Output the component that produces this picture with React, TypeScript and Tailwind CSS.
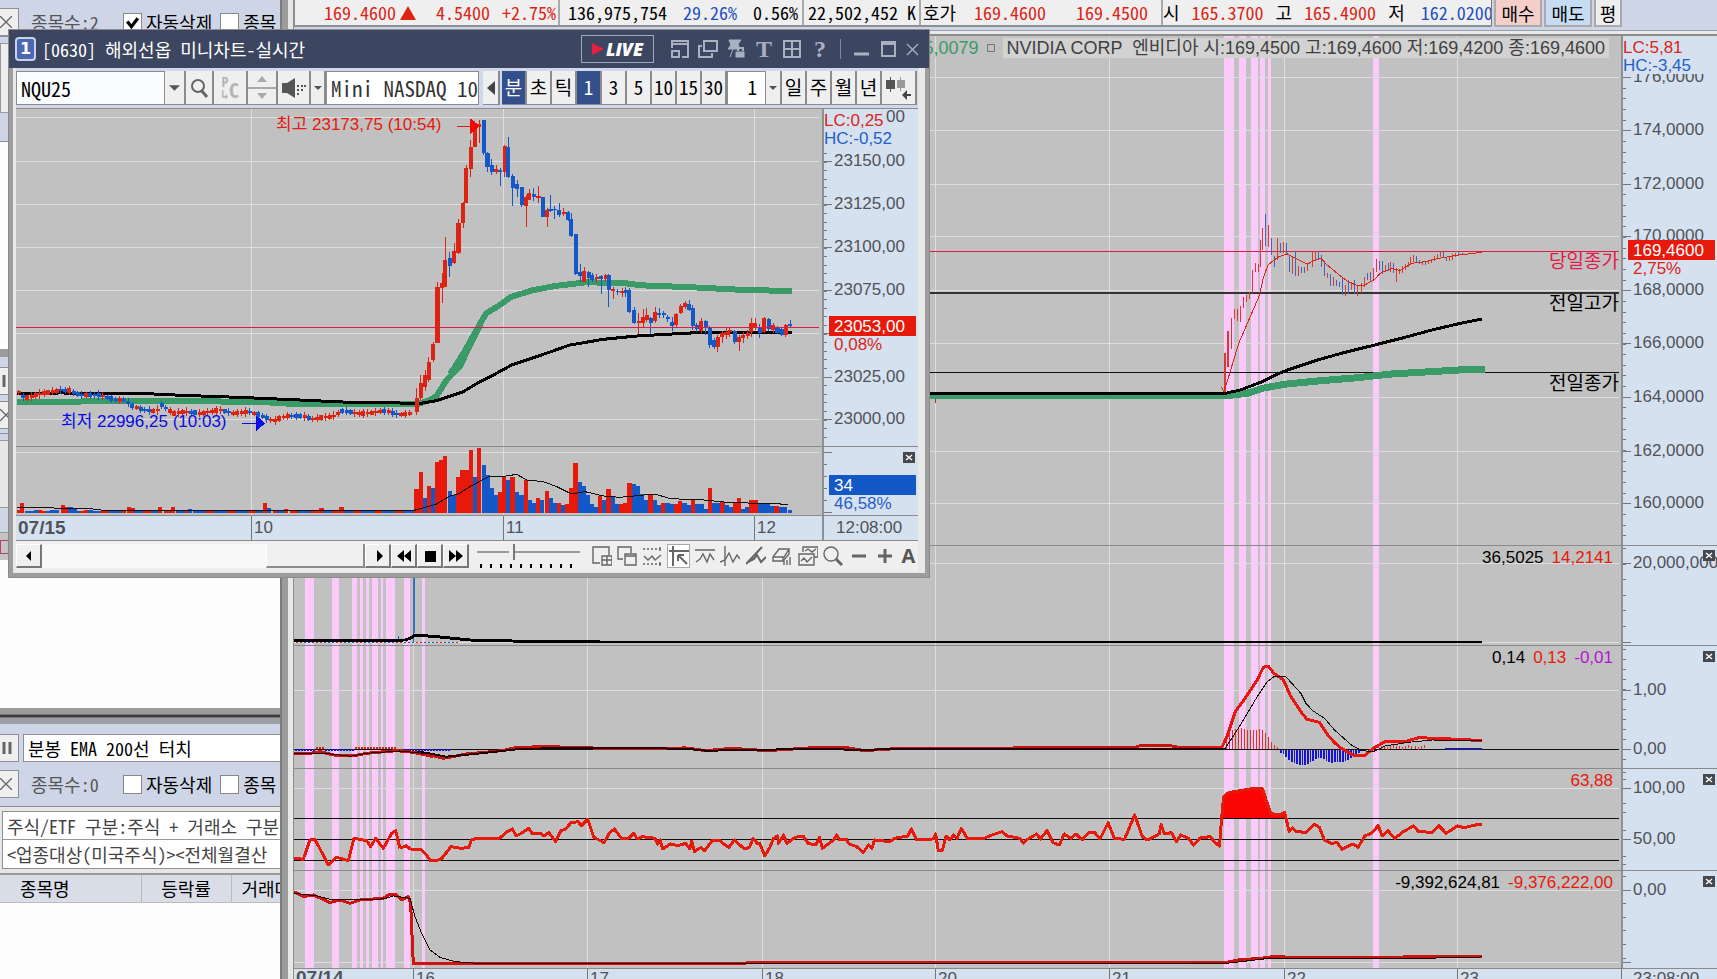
import type { ReactNode } from "react"

type Point = [number, number]
// [x, high, low, bodyTop, bodyBottom, up]
type Candle = [number, number, number, number, number, 0 | 1]
type Bar = [number, number, 0 | 1]

const RED = "#dc2414"
const BLUE = "#1458c8"
const GREEN = "#3a9a68"

const MONO =
  "[font-family:'Noto_Sans_Mono_CJK_KR','Noto_Sans_CJK_KR','Liberation_Mono',monospace]"
const SANS = "[font-family:'Liberation_Sans','Noto_Sans_CJK_KR',sans-serif]"

const toPath = (points: Point[]) => points.map((p) => p.join(",")).join(" ")

const pairs = (values: string): Point[] =>
  values.split(" ").map((v) => v.split(",").map(Number) as Point)

const Line = ({
  points,
  color,
  width,
}: {
  points: string
  color: string
  width: number
}) => (
  <polyline
    points={toPath(pairs(points))}
    fill="none"
    stroke={color}
    strokeWidth={width}
    strokeLinejoin="round"
    vectorEffect="non-scaling-stroke"
  />
)

/* ---------- main chart data ---------- */

const sessionBands: Point[] = [
  [305, 9], [332, 7], [352, 5], [360, 3], [366, 3], [372, 6], [381, 2],
  [386, 9], [404, 6], [422, 3], [1224, 10], [1239, 7], [1251, 7],
  [1260, 5], [1268, 3], [1373, 6],
]

const hourLines = [413, 587, 762, 935, 1109, 1284, 1457]

const mainTicks: [number, number, number, 0 | 1][] = [
  [104, 458, 575, 1], [113, 393, 500, 1], [122, 353, 447, 1], [131, 327, 357, 1],
  [140, 327, 362, 1], [149, 318, 365, 1], [158, 290, 325, 1], [167, 285, 305, 1],
  [176, 277, 298, 1], [185, 210, 280, 1], [194, 190, 215, 1], [203, 192, 215, 1],
  [211, 120, 200, 1], [216, 85, 150, 1], [225, 43, 137, 0], [234, 75, 140, 1],
  [243, 115, 165, 0], [252, 168, 200, 0], [261, 115, 180, 1], [270, 130, 160, 0],
  [279, 125, 160, 1], [288, 128, 165, 0], [297, 165, 217, 0], [305, 168, 222, 1],
  [314, 153, 227, 0], [323, 198, 228, 1], [332, 200, 220, 0], [341, 200, 218, 0],
  [350, 190, 213, 1], [365, 153, 200, 1], [373, 153, 180, 1], [382, 155, 180, 0],
  [391, 166, 200, 0], [400, 190, 227, 0], [409, 220, 235, 1], [418, 222, 258, 0],
  [427, 232, 257, 1], [436, 240, 258, 0], [445, 245, 262, 0], [454, 235, 285, 0],
  [462, 255, 287, 1], [471, 240, 283, 0], [480, 245, 270, 1], [489, 240, 283, 0],
  [498, 258, 287, 1], [510, 248, 280, 1], [519, 230, 260, 1], [528, 220, 240, 0],
  [536, 215, 245, 0], [545, 203, 240, 1], [554, 178, 215, 1], [563, 183, 210, 0],
  [572, 183, 222, 0], [581, 195, 215, 1], [590, 188, 212, 0], [597, 185, 215, 1],
  [604, 188, 220, 0], [613, 205, 245, 1], [622, 208, 222, 1], [631, 198, 218, 1],
  [640, 192, 210, 1], [649, 185, 200, 1], [657, 172, 195, 1], [665, 165, 185, 1],
  [674, 167, 190, 0], [683, 180, 192, 0], [692, 182, 195, 1], [701, 183, 195, 0],
  [710, 180, 193, 1], [719, 178, 190, 1], [728, 168, 182, 1], [737, 162, 178, 1],
  [746, 153, 172, 1], [755, 157, 172, 0], [764, 170, 182, 0], [773, 170, 182, 1],
  [782, 162, 180, 1], [791, 158, 170, 1], [800, 153, 168, 0], [812, 158, 166, 1],
]

const macdUp = [610, 605, 600, 598, 594, 595, 598, 600, 600, 600, 600, 598, 600, 610, 622, 636, 645, 652]
const macdDown = [
  668, 673, 682, 690, 696, 700, 703, 704, 704, 704, 702, 697, 692, 687, 685, 684, 688, 692,
  696, 699, 697, 695, 695, 695, 694, 690, 684, 677, 672, 668, 664,
]

/* ---------- mini chart data ---------- */

const miniCandles: Candle[] = [
  [73, 820, 870, 825, 860, 1], [84, 770, 845, 785, 840, 1], [97, 727, 785, 733, 780, 1],
  [109, 545, 730, 560, 730, 1], [122, 520, 608, 550, 565, 1], [131, 410, 560, 480, 560, 1],
  [144, 455, 532, 475, 497, 0], [158, 430, 492, 452, 490, 1], [170, 358, 462, 370, 458, 1],
  [183, 305, 385, 308, 370, 1], [192, 195, 310, 205, 308, 1], [205, 120, 230, 142, 207, 1],
  [217, 62, 142, 75, 140, 1], [230, 60, 130, 72, 80, 1], [243, 60, 165, 60, 160, 0],
  [254, 155, 215, 158, 200, 0], [266, 178, 225, 195, 215, 0], [279, 195, 222, 207, 215, 1],
  [291, 205, 257, 210, 217, 0], [304, 135, 230, 137, 215, 1], [314, 110, 235, 140, 230, 0],
  [327, 222, 317, 228, 265, 0], [340, 240, 292, 252, 268, 0], [353, 262, 320, 262, 315, 0],
  [366, 285, 380, 292, 318, 1], [375, 267, 300, 280, 300, 1], [388, 265, 302, 283, 292, 0],
  [402, 257, 308, 288, 294, 1], [414, 290, 352, 292, 350, 0], [427, 325, 380, 330, 350, 1],
  [437, 285, 335, 326, 332, 0], [449, 318, 357, 326, 331, 0], [462, 308, 350, 330, 345, 0],
  [475, 325, 347, 335, 341, 1], [488, 332, 362, 335, 360, 0], [497, 340, 410, 358, 407, 0],
  [510, 403, 524, 403, 522, 0], [523, 492, 545, 515, 527, 0], [535, 502, 547, 512, 545, 1],
  [548, 512, 560, 515, 535, 0], [558, 518, 545, 525, 540, 0], [571, 522, 548, 530, 537, 1],
  [584, 525, 582, 528, 536, 0], [597, 522, 545, 525, 537, 1], [606, 522, 622, 525, 570, 0],
  [619, 560, 598, 566, 572, 1], [632, 568, 585, 572, 577, 0], [645, 565, 592, 572, 578, 1],
  [656, 562, 590, 570, 580, 0], [666, 565, 638, 570, 635, 0], [680, 622, 672, 630, 668, 0],
  [693, 640, 702, 662, 670, 1], [706, 628, 682, 650, 668, 1], [717, 625, 665, 645, 660, 1],
  [728, 650, 702, 655, 668, 0], [741, 622, 668, 635, 662, 1], [753, 625, 655, 639, 646, 0],
  [766, 632, 655, 640, 645, 0], [778, 645, 665, 652, 657, 0], [790, 650, 692, 665, 677, 0],
  [802, 640, 680, 642, 675, 1], [815, 612, 642, 618, 640, 1], [828, 603, 628, 608, 622, 1],
  [840, 600, 634, 612, 630, 0], [850, 615, 690, 625, 677, 0], [862, 668, 697, 675, 687, 0],
  [875, 655, 698, 662, 692, 1], [888, 660, 705, 663, 680, 0], [900, 678, 745, 680, 735, 0],
  [912, 715, 748, 720, 740, 0], [923, 705, 755, 712, 742, 1], [936, 692, 728, 698, 712, 1],
  [948, 685, 718, 695, 705, 1], [958, 684, 712, 690, 697, 1], [972, 690, 733, 692, 727, 0],
  [985, 705, 752, 710, 725, 1], [997, 697, 728, 706, 714, 1], [1010, 690, 718, 698, 708, 1],
  [1020, 655, 710, 668, 695, 1], [1032, 655, 690, 668, 680, 1], [1045, 672, 715, 680, 700, 0],
  [1058, 652, 700, 655, 695, 1], [1071, 655, 692, 657, 688, 0], [1084, 668, 700, 676, 690, 1],
  [1096, 678, 702, 684, 698, 0], [1108, 680, 708, 688, 704, 0], [1120, 672, 712, 675, 706, 1],
  [1133, 661, 685, 671, 679, 0],
]

const openingCourse = pairs(
  "55,215 75,235 120,222 180,210 210,212 240,225 300,225 345,240 375,240 400,260 440,270 470,274 485,255 520,280 560,275 600,280 660,270 700,280 750,275 785,288 820,303 860,287 910,288 940,297 1000,288 1030,272 1080,282 1160,272 1200,285 1240,278",
)

const courseAt = (x: number) => {
  const i = Math.max(1, openingCourse.findIndex((p) => p[0] >= x))
  const [x0, y0] = openingCourse[i - 1]
  const [x1, y1] = openingCourse[i]
  return y0 + ((y1 - y0) * (x - x0)) / (x1 - x0)
}

const openingCandles: Candle[] = Array.from({ length: 94 }, (_, i) => {
  const x = 57 + i * 12.6
  const y = courseAt(x)
  const next = courseAt(Math.min(x + 12.6, 1240))
  const body = 3 + ((i * 7) % 5)
  const wick = 8 + ((i * 11) % 7)
  return [x, y - wick, y + wick, y - body, y + body, next < y || i % 4 === 0 ? 1 : 0]
})

const breakoutCandles: Candle[] = [
  [1250, 205, 285, 235, 275, 1],
  [1263, 165, 240, 188, 235, 1],
  [1276, 150, 212, 172, 186, 1],
]

const tallOpening: Record<number, Bar> = {
  1: [67, 548, 1], 10: [190, 555, 1], 11: [200, 562, 1], 12: [212, 562, 0], 13: [225, 566, 0],
  26: [388, 562, 1], 27: [398, 564, 1], 34: [480, 560, 1], 37: [520, 562, 1],
  41: [570, 566, 0], 59: [795, 548, 1], 60: [808, 565, 0], 64: [858, 566, 1],
  72: [965, 565, 1], 77: [1025, 562, 1],
}

const openingVolume: Bar[] = Array.from(
  { length: 95 },
  (_, i) => tallOpening[i] ?? [57 + i * 12.6, 570 + ((i * 5) % 4), i % 5 < 2 ? 1 : 0],
)

const earlyVolume: Bar[] = [
  [1250, 507, 1], [1263, 457, 1], [1275, 533, 0], [1287, 497, 1], [1300, 503, 0],
  [1313, 425, 1], [1325, 421, 1], [1336, 408, 1], [1350, 512, 0], [1362, 525, 0],
  [1376, 470, 1], [1388, 450, 1], [1400, 450, 1],
]

const lateVolume: Bar[] = [
  [3, 390, 1], [15, 472, 0], [28, 385, 1], [43, 435, 0], [54, 465, 0], [66, 503, 0],
  [78, 525, 0], [91, 515, 1], [103, 470, 1], [115, 480, 0], [128, 470, 1], [142, 515, 0],
  [155, 525, 0], [168, 480, 1], [180, 540, 0], [192, 548, 0], [204, 535, 1], [217, 540, 0],
  [231, 512, 1], [243, 535, 0], [256, 548, 0], [268, 548, 1], [280, 556, 0], [292, 552, 1],
  [304, 503, 1], [317, 430, 1], [330, 485, 0], [342, 497, 0], [354, 525, 0], [366, 552, 0],
  [379, 560, 0], [391, 528, 1], [403, 540, 0], [416, 507, 1], [429, 528, 0], [441, 552, 0],
  [454, 552, 1], [466, 548, 1], [479, 488, 1], [492, 492, 0], [504, 497, 0], [517, 522, 0],
  [529, 540, 0], [542, 522, 1], [555, 540, 0], [567, 556, 0], [580, 548, 1], [593, 548, 0],
  [606, 552, 0], [619, 552, 1], [631, 543, 1], [644, 548, 0], [656, 556, 0], [669, 540, 1],
  [682, 552, 0], [695, 552, 0], [708, 566, 0], [721, 503, 1], [734, 548, 0], [746, 548, 0],
  [758, 546, 1], [770, 556, 0], [782, 560, 0], [795, 545, 1], [807, 533, 1], [820, 566, 0],
  [832, 562, 0], [845, 540, 1], [857, 540, 1], [870, 548, 0], [882, 550, 0], [895, 552, 0],
  [908, 558, 0], [920, 558, 1], [933, 560, 0], [946, 562, 0], [960, 570, 0],
]

const Candles = ({ items, body }: { items: Candle[]; body: number }) => (
  <>
    {items.map(([x, high, low, top, bottom, up], i) => (
      <g key={i} fill={up ? RED : BLUE}>
        <rect x={x - 1.5} y={high} width={3} height={low - high} />
        <rect x={x - body / 2} y={top} width={body} height={bottom - top} />
      </g>
    ))}
  </>
)

const VolumeBars = ({ items }: { items: Bar[] }) => (
  <>
    {items.map(([x, top, up], i) => (
      <rect key={i} x={x - 6.5} y={top} width={13} height={578 - top} fill={up ? "#e6190a" : BLUE} />
    ))}
  </>
)

/* ---------- axis ---------- */

type Label = { y: number; text: string }

const Axis = ({
  top,
  height,
  labels,
  minor,
  children,
}: {
  top: number
  height: number
  labels: Label[]
  minor: number[]
  children?: ReactNode
}) => (
  <svg
    className={`w-24 shrink-0 bg-[#d6e1f0] text-[17px] ${SANS}`}
    height={height}
    viewBox={`0 ${top} 96 ${height}`}
  >
    <rect x="0" y={top} width="2" height={height} fill="#8c8f94" />
    {minor.map((y) => (
      <rect key={y} x="2" y={Math.round(y)} width="3" height="1" fill="#777" />
    ))}
    {labels.map(({ y, text }) => (
      <g key={text + y}>
        <rect x="2" y={y} width="8" height="1" fill="#777" />
        <text x="12" y={y + 5} fill="#505357">
          {text}
        </text>
      </g>
    ))}
    {children}
  </svg>
)

const range = (from: number, to: number, step: number) => {
  const out: number[] = []
  for (let y = from; y < to; y += step) out.push(y)
  return out
}

const CloseMark = ({ x, y }: { x: number; y: number }) => (
  <g>
    <rect x={x} y={y} width="12" height="11" fill="#44474c" />
    <path d={`M${x + 3} ${y + 3}l6 5m0-5l-6 5`} stroke="#fff" strokeWidth="1.4" />
  </g>
)

/* ---------- main chart ---------- */

const Pane = ({
  top,
  height,
  grid,
  labels,
  minor,
  axis,
  readout,
  children,
}: {
  top: number
  height: number
  grid: number[]
  labels: Label[]
  minor: number[]
  axis?: ReactNode
  readout?: ReactNode
  children?: ReactNode
}) => (
  <div className="flex shrink-0">
    <div className="relative min-w-0 flex-1">
      <svg
        className="block w-full bg-[#c1c1c1]"
        height={height}
        viewBox={`294 ${top} 1327 ${height}`}
        preserveAspectRatio="none"
        shapeRendering="crispEdges"
      >
        {sessionBands.map(([x, w]) => (
          <rect key={x} x={x} y={top} width={w} height={height} fill="#fcc9fb" />
        ))}
        {hourLines.map((x) => (
          <rect key={x} x={x} y={top} width="1" height={height} fill="#dedede" />
        ))}
        {grid.map((y) => (
          <rect key={y} x="294" y={y} width="1325" height="1" fill="#dedede" />
        ))}
        {children}
        <rect x="294" y={top + height - 1} width="1327" height="1" fill="#8a8a8a" />
      </svg>
      {readout}
    </div>
    <Axis top={top} height={height} labels={labels} minor={minor}>
      <rect x="0" y={top + height - 1} width="96" height="1" fill="#8a8a8a" />
      {axis}
    </Axis>
  </div>
)

const Readout = ({ items }: { items: [string, string][] }) => (
  <p className={`absolute top-0.5 right-2 flex gap-2 text-[17px] leading-5 ${SANS}`}>
    {items.map(([text, color]) => (
      <span key={text} className={color}>
        {text}
      </span>
    ))}
  </p>
)

const RIGHT = "translate(1190 200) scale(.3361 .3333)"
const RIGHT_LOW = "translate(1190 530) scale(.3361 .3333)"
const MIDDLE = "translate(400 730) scale(.5102 .3333)"
const LEFT = "translate(0 570) scale(.3333)"

const PricePane = () => (
  <Pane
    top={36}
    height={510}
    grid={[77, 130, 184, 236, 290, 343, 397, 451, 503]}
    labels={[
      { y: 77, text: "176,0000" },
      { y: 130, text: "174,0000" },
      { y: 184, text: "172,0000" },
      { y: 236, text: "170,0000" },
      { y: 290, text: "168,0000" },
      { y: 343, text: "166,0000" },
      { y: 397, text: "164,0000" },
      { y: 451, text: "162,0000" },
      { y: 503, text: "160,0000" },
    ]}
    minor={range(77, 543, 10.66)}
    axis={
      <>
        <rect x="2" y="36" width="94" height="38" fill="#d6e1f0" />
        <text x="2" y="53" fill={RED}>LC:5,81</text>
        <text x="2" y="71" fill="#2460c8">HC:-3,45</text>
        <rect x="7" y="240" width="87" height="20" fill="#e6190a" />
        <text x="12" y="256" fill="#fff">169,4600</text>
        <text x="12" y="274" fill={RED}>2,75%</text>
      </>
    }
    readout={
      <>
        <p
          className={`absolute inset-x-3 top-0.5 flex h-5 items-center justify-end gap-1.5 text-[18px] whitespace-pre ${SANS}`}
        >
          <span className="text-[#3a9a68]">165,0079</span>
          <span className="mx-0.5 size-2 border border-[#777]" />
          <span className="bg-[#d2d2d2] px-1 leading-5 text-[#404040]">
            NVIDIA CORP  엔비디아 시:169,4500 고:169,4600 저:169,4200 종:169,4600
          </span>
        </p>
        <div className={`absolute top-[216px] right-0.5 flex flex-col text-right text-[19px] leading-5 ${SANS}`}>
          <span className="mb-[22px] text-[#e01c4c]">당일종가</span>
          <span className="mb-[60px] text-black">전일고가</span>
          <span className="text-black">전일종가</span>
        </div>
      </>
    }
  >
    <rect x="294" y="251" width="1325" height="1" fill="#dc1c40" />
    <rect x="294" y="292" width="1325" height="2" fill="#333" />
    <rect x="294" y="372" width="1325" height="1" fill="#111" />
    <rect x="930" y="397" width="28" height="1" fill={RED} />
    <rect x="935" y="397" width="1" height="6" fill={RED} />
    <g transform={RIGHT}>
      <Line
        points="-900,587 110,587 170,580 215,565 280,553 380,543 500,533 600,522 700,516 800,510 878,509"
        color={GREEN}
        width={7}
      />
      <Line
        points="-900,580 105,580 150,570 215,545 260,522 290,510 380,480 450,460 550,435 640,412 720,390 800,371 870,357"
        color="#000"
        width={3}
      />
      {mainTicks.map(([x, high, low, up]) => (
        <rect
          key={x}
          x={x - 1.5}
          y={high}
          width={3.2}
          height={low - high}
          fill={up ? "#d83a34" : "#4862bc"}
        />
      ))}
      <Line
        points="94,562 100,575 112,540 145,430 205,290 218,235 232,195 250,180 265,170 290,162 320,178 350,193 365,183 390,175 405,192 440,222 470,245 500,258 520,255 550,238 565,220 600,205 625,212 660,190 700,185 740,175 800,165 870,157"
        color={RED}
        width={1}
      />
    </g>
  </Pane>
)

const VolumePane = () => (
  <Pane
    top={546}
    height={100}
    grid={[563, 642]}
    labels={[
      { y: 563, text: "20,000,000" },
      { y: 642, text: "" },
    ]}
    minor={range(548, 640, 15.5)}
    axis={<CloseMark x={82} y={550} />}
    readout={<Readout items={[["36,5025", "text-black"], ["14,2141", "text-[#e6190a]"]]} />}
  >
    {range(296, 460, 4).map((x, i) => (
      <rect key={x} x={x} y="642" width="2" height="1" fill={i % 5 < 2 ? RED : BLUE} />
    ))}
    <rect x="413" y="546" width="1" height="97" fill="#3c6cc8" />
    <rect x="398" y="636" width="1" height="6" fill={BLUE} />
    <rect x="406" y="638" width="1" height="4" fill={RED} />
    <Line
      points="294,641 405,640 411,638 415,635 440,637 470,640 512,641 600,642 1482,642"
      color="#000"
      width={3}
    />
    <rect x="413" y="546" width="2" height="87" fill="#3c6cc8" />
  </Pane>
)

const MacdPane = () => (
  <Pane
    top={646}
    height={123}
    grid={[690]}
    labels={[
      { y: 690, text: "1,00" },
      { y: 749, text: "0,00" },
    ]}
    minor={range(649, 768, 10)}
    axis={<CloseMark x={82} y={651} />}
    readout={
      <Readout
        items={[
          ["0,14", "text-black"],
          ["0,13", "text-[#e6190a]"],
          ["-0,01", "text-[#b414d2]"],
        ]}
      />
    }
  >
    <rect x="294" y="749" width="1325" height="1" fill="#111" />
    {range(295, 450, 3).map((x, i) => (
      <rect
        key={x}
        x={x}
        y={(i > 6 && i < 10) || (i > 19 && i < 34) ? 747 : 749}
        width="2"
        height="2"
        fill={(i > 6 && i < 10) || (i > 19 && i < 34) ? RED : "#1414d2"}
      />
    ))}
    <g transform={RIGHT_LOW}>
      {macdUp.map((y, i) => (
        <rect key={i} x={107 + i * 9} y={y} width={3} height={657 - y} fill="#e03028" />
      ))}
      {macdDown.map((y, i) => (
        <rect key={i} x={268 + i * 8} y={659} width={5} height={y - 659} fill="#1414d2" />
      ))}
      {range(560, 700, 9).map((x, i) => (
        <rect key={x} x={x} y={646 + ((i * 3) % 5)} width={3} height={9} fill="#e03028" />
      ))}
      <rect x="760" y="655" width="110" height="4" fill="#1c1c8c" />
      <Line
        points="-50,653 95,652 110,620 135,545 160,510 200,450 218,412 232,408 250,430 278,450 300,500 330,545 348,568 385,577 410,615 430,638 450,655 490,678 518,678 545,655 580,635 640,635 680,623 800,628 870,632"
        color="#ea1410"
        width={3}
      />
      <Line
        points="-50,657 105,655 150,585 200,500 230,455 250,440 285,440 330,490 345,520 365,542 400,565 430,600 480,645 510,662 545,665 580,648 650,637 720,630 870,633"
        color="#111"
        width={1}
      />
    </g>
    <g transform={MIDDLE}>
      <Line
        points="0,62 50,72 85,85 130,72 200,62 230,52 290,50 400,55 560,54 600,62 650,55 700,60 720,62 800,54 880,54 910,62 980,55 1440,53 1450,47 1510,47 1530,53 1568,53"
        color="#c81410"
        width={3}
      />
      <Line
        points="0,62 50,68 90,80 140,73 200,63 240,56 400,54 560,56 600,62 700,60 800,56 910,60 980,56 1568,56"
        color="#200"
        width={2}
      />
    </g>
    <g transform={LEFT}>
      <Line
        points="883,552 920,552 960,545 1000,555 1060,558 1100,550 1190,542 1240,547 1300,560"
        color="#c81410"
        width={3}
      />
      <Line points="883,550 920,552 970,549 1050,559 1100,550 1200,543 1300,553" color="#200" width={1} />
    </g>
  </Pane>
)

const RsiPane = () => (
  <Pane
    top={769}
    height={102}
    grid={[788]}
    labels={[
      { y: 788, text: "100,00" },
      { y: 839, text: "50,00" },
    ]}
    minor={[772, 779, 803, 812, 830, 856, 864]}
    axis={<CloseMark x={82} y={774} />}
    readout={<Readout items={[["63,88", "text-[#e6190a]"]]} />}
  >
    {[818, 839, 860].map((y) => (
      <rect key={y} x="294" y={y} width="1325" height="1" fill="#111" />
    ))}
    <g transform={LEFT}>
      <Line
        points="883,865 910,868 930,810 945,808 985,885 1010,862 1045,872 1062,805 1100,812 1112,830 1127,805 1150,835 1175,790 1187,782 1200,835"
        color="#e6190a"
        width={3}
      />
    </g>
    <g transform={MIDDLE}>
      <Line
        points="0,355 12,347 20,357 40,358 52,375 60,392 72,392 82,385 100,350 120,355 135,352 140,330 150,325 195,325 210,305 220,297 228,318 240,308 252,295 260,312 275,310 282,318 292,308 305,335 315,303 325,297 335,278 350,275 355,288 368,268 380,322 400,338 410,310 420,297 435,327 448,325 458,310 465,327 475,320 500,325 505,342 510,330 515,357 530,342 545,347 560,340 568,357 572,333 577,365 590,352 597,362 612,332 625,330 637,345 645,352 655,330 675,357 685,352 692,325 700,340 705,340 715,378 725,352 732,325 740,318 742,340 752,315 758,340 775,322 790,318 800,340 815,345 822,322 828,355 850,330 856,315 862,330 875,328 880,342 895,350 908,368 918,345 925,355 930,330 960,335 970,325 995,318 1002,297 1012,328 1045,327 1050,312 1055,362 1063,362 1070,318 1078,330 1085,315 1092,325 1100,295 1112,325 1145,325 1160,315 1180,305 1190,318 1215,325 1222,340 1230,328 1248,312 1255,327 1268,302 1280,338 1292,345 1302,312 1315,325 1325,312 1337,330 1350,308 1362,308 1372,327 1388,278 1400,325 1420,328 1440,255 1455,320 1465,330 1488,312 1492,283 1498,312 1512,308 1522,335 1530,315 1545,325 1555,345 1568,325"
        color="#e6190a"
        width={3}
      />
    </g>
    <g transform={RIGHT_LOW}>
      <polygon points="94,865 100,800 115,788 180,777 215,775 228,815 240,850 262,855 282,848 288,865" fill="#fa0404" />
      <Line
        points="25,925 60,920 75,938 88,948 94,865 100,800 115,788 180,777 215,775 228,815 240,850 262,855 282,848 295,905 305,893 315,905 345,907 370,883 385,892 400,930 420,940 438,938 452,958 485,942 500,952 520,918 540,910 560,887 572,918 588,902 610,925 635,905 665,888 680,905 720,907 740,887 762,910 795,888 815,893 850,885 870,885"
        color="#e6190a"
        width={3}
      />
    </g>
  </Pane>
)

const ObvPane = () => (
  <Pane
    top={871}
    height={98}
    grid={[890, 962]}
    labels={[
      { y: 890, text: "0,00" },
      { y: 962, text: "" },
    ]}
    minor={range(876, 960, 13.6)}
    axis={<CloseMark x={82} y={876} />}
    readout={
      <Readout
        items={[
          ["-9,392,624,81", "text-black"],
          ["-9,376,222,00", "text-[#e6190a]"],
        ]}
      />
    }
  >
    <g transform={LEFT}>
      <Line
        points="883,965 910,980 940,975 990,998 1020,990 1050,1000 1080,990 1150,985 1170,972 1190,975 1205,990 1225,980 1232,1000 1240,1180 3600,1178"
        color="#d21410"
        width={3}
      />
      <Line
        points="883,970 950,978 1000,990 1150,987 1180,978 1230,985 1245,1040 1265,1090 1290,1140 1320,1162 1365,1175 1430,1180 3600,1180"
        color="#200"
        width={1}
      />
    </g>
    <g transform={RIGHT_LOW}>
      <Line
        points="0,1299 110,1297 145,1290 220,1284 240,1281 545,1282 650,1281 870,1279"
        color="#c81410"
        width={3}
      />
      <Line points="0,1301 110,1300 220,1287 650,1286 870,1281" color="#200" width={1} />
    </g>
  </Pane>
)

const HourAxis = () => (
  <svg className={`h-3 w-full bg-[#d6e1f0] text-[17px] ${SANS}`} viewBox="294 969 1423 12" preserveAspectRatio="xMinYMin slice">
    <text x="296" y="984" fill="#505357" className="text-[19px] font-bold">07/14</text>
    {[16, 17, 18, 20, 21, 22, 23].map((hour, i) => (
      <g key={hour} fill="#505357">
        <rect x={hourLines[i]} y="969" width="1" height="12" fill="#777" />
        <text x={hourLines[i] + 3} y="984">{hour}</text>
      </g>
    ))}
    <rect x="1621" y="969" width="1" height="12" fill="#777" />
    <text x="1633" y="984" fill="#505357">23:08:00</text>
  </svg>
)

const Ticker = () => (
  <div className={`flex h-[27px] shrink-0 items-stretch text-[18px] ${MONO}`}>
    <div className="flex items-center overflow-hidden border-b-2 border-l border-[#8c8f94] bg-[#efefef] text-[#dc2414]">
      <div className="flex w-[265px] items-center justify-end gap-5 border-r-2 border-[#aaa] pr-0.5">
        <span className="flex items-center gap-1">
          169.4600
          <svg className="h-3.5 w-4" viewBox="0 0 16 14"><path d="M8 0l8 14H0z" fill={RED} /></svg>
        </span>
        <span>4.5400</span>
        <span className="-ml-2">+2.75%</span>
      </div>
      <div className="flex w-[244px] items-center justify-between border-r-2 border-[#aaa] pr-1 pl-2 text-black">
        <span>136,975,754</span>
        <span className="text-[#2450c0]">29.26%</span>
        <span>0.56%</span>
      </div>
      <div className="w-[117px] border-r-2 border-[#aaa] pl-1 whitespace-nowrap text-black">22,502,452 K</div>
      <div className="flex w-[242px] items-center border-r-2 border-[#aaa] pl-0.5">
        <span className="w-[51px] text-black">호가</span>
        <span className="w-[102px]">169.4600</span>
        <span>169.4500</span>
      </div>
      <div className="flex w-[329px] items-center gap-3 overflow-hidden border-r border-[#777] whitespace-nowrap">
        <span className="text-black">시</span>
        <span>165.3700</span>
        <span className="text-black">고</span>
        <span>165.4900</span>
        <span className="text-black">저</span>
        <span className="ml-1 text-[#2450c0]">162.0200</span>
      </div>
    </div>
    <div className="ml-0.5 flex gap-0.5 text-black">
      <button className="w-12 border-2 border-t-0 border-[#aaa] bg-[#f4cfca]">매수</button>
      <button className="w-12 border-2 border-t-0 border-[#aaa] bg-[#c6dcf2]">매도</button>
      <button className="w-7 border-2 border-t-0 border-[#aaa] bg-[#eee]">평</button>
    </div>
  </div>
)

/* ---------- sidebar ---------- */

const SmallButton = ({ label, children }: { label: string; children: ReactNode }) => (
  <button
    aria-label={label}
    className="flex h-7 w-[19px] shrink-0 items-center justify-end border border-l-0 border-[#8c8f94] bg-[#efefef] pr-1.5"
  >
    {children}
  </button>
)

const Cross = () => (
  <svg className="size-3" viewBox="0 0 12 12"><path d="M0 0l12 12M12 0L0 12" stroke="#666" strokeWidth="1.3" /></svg>
)

const Pause = () => (
  <svg className="h-3 w-2.5" viewBox="0 0 10 12"><path d="M2 0v12M8 0v12" stroke="#666" strokeWidth="3" /></svg>
)

const WatchOptions = ({ count, checked }: { count: number; checked: boolean }) => (
  <div className="flex h-7 shrink-0 items-center whitespace-nowrap text-black">
    <SmallButton label="닫기">
      <Cross />
    </SmallButton>
    <span className="ml-3 w-[92px] text-[#555]">종목수:{count}</span>
    <label className="flex items-center gap-1">
      <CheckBox defaultChecked={checked} />
      자동삭제
    </label>
    <label className="ml-2 flex items-center gap-1">
      <CheckBox defaultChecked={false} />
      종목
    </label>
  </div>
)

const CheckBox = ({ defaultChecked }: { defaultChecked: boolean }) => (
  <span className="relative flex size-[19px]">
    <input
      type="checkbox"
      defaultChecked={defaultChecked}
      className="peer size-[19px] appearance-none border border-[#888] bg-white"
    />
    <svg className="pointer-events-none absolute inset-0 hidden peer-checked:block" viewBox="0 0 18 18">
      <path d="M4 8l4 5 6-8" fill="none" stroke="#000" strokeWidth="3" />
    </svg>
  </span>
)

const Sidebar = () => (
  <aside className={`flex h-full w-[280px] shrink-0 flex-col overflow-hidden bg-[#cdd5e6] text-[18px] ${MONO}`}>
    <div className="border-b border-[#8c8f94] pt-2">
      <WatchOptions count={2} checked />
    </div>
    <div className="mt-1.5 h-[70px] shrink-0 border border-[#999] bg-[#eee]" />
    <div className="mt-7 h-[208px] shrink-0 border-t border-[#8c8f94] bg-[#fdfdfe]" />
    <div className="h-2 shrink-0 bg-[#9c9c9c]" />
    <div className="mt-2.5 flex shrink-0 flex-col gap-1.5 border-b border-[#8c8f94] pb-1">
      <SmallButton label="일시정지"><Pause /></SmallButton>
      <SmallButton label="닫기"><Cross /></SmallButton>
    </div>
    <div className="mt-1.5 h-[68px] shrink-0 border-y border-[#999] bg-[#e6e6e6]" />
    <div className="mt-6 flex h-7 shrink-0 items-center border-t border-[#999] bg-[#c4c4c4]">
      <span className="h-3.5 w-3 border border-[#b43c78]" />
    </div>
    <div className="min-h-0 flex-1 bg-[#fdfdfe]" />
    <div className="h-1.5 shrink-0 bg-[#9c9c9c]" />
    <div className="h-1 shrink-0 border-y border-[#777] bg-[#3c3c3c]" />
    <div className="h-1.5 shrink-0 bg-[#9ca0a6]" />
    <div className="flex h-[255px] shrink-0 flex-col">
      <div className="mt-2.5 flex shrink-0 gap-1">
        <SmallButton label="일시정지"><Pause /></SmallButton>
        <input
          aria-label="조건식"
          defaultValue="분봉 EMA 200선 터치"
          className="h-7 min-w-0 flex-1 border border-r-0 border-[#8c8f94] bg-white px-1 text-black"
        />
      </div>
      <div className="border-b border-[#8c8f94] py-2">
        <WatchOptions count={0} checked={false} />
      </div>
      <div className="bg-[#e6e6e6] pt-1 pb-1 pl-0.5 text-[#444]">
        <div className="border border-r-0 border-[#8c8f94] bg-white whitespace-nowrap">
          <p className="h-7 overflow-hidden border-b border-[#999] pl-1 leading-7">주식/ETF 구분:주식 + 거래소 구분</p>
          <p className="h-7 overflow-hidden pl-1 leading-7">&lt;업종대상(미국주식)&gt;&lt;전체월결산</p>
        </div>
      </div>
      <div className="flex-1 bg-[#fdfdfe]">
        <table className="w-[330px] table-fixed border-t-2 border-[#999]">
          <thead>
            <tr className="h-[27px] bg-[#d9dde8] text-black">
              <th className="w-[141px] border-r border-b border-[#bbb] pl-5 text-left font-normal">종목명</th>
              <th className="w-[90px] border-r border-b border-[#bbb] font-normal">등락률</th>
              <th className="border-b border-[#bbb] pl-2.5 text-left font-normal">거래대금</th>
            </tr>
          </thead>
        </table>
      </div>
    </div>
  </aside>
)

/* ---------- mini window ---------- */

const TitleIcon = ({ label, children }: { label: string; children: ReactNode }) => (
  <button aria-label={label} className="flex w-5 justify-center">
    <svg className="size-5" viewBox="0 0 20 20" fill="none" stroke="#a9b0c0" strokeWidth="2">
      {children}
    </svg>
  </button>
)

const TitleBar = () => (
  <header className="flex h-[38px] shrink-0 items-center bg-[#3c4660] px-1.5 text-white">
    <span className="flex h-6 w-[21px] items-center justify-center rounded border-2 border-[#c8d2ee] bg-[#4c68b0] text-[16px] font-bold [font-family:'DejaVu_Sans',sans-serif]">
      1
    </span>
    <h1 className={`ml-1.5 text-[18px] whitespace-nowrap ${MONO}`}>[0630] 해외선옵 미니차트-실시간</h1>
    <button className="mr-4 ml-auto flex h-7 w-[73px] items-center justify-center gap-0.5 border border-[#a0a8b8] text-[18px] leading-none font-black italic [font-family:'Open_Sans',sans-serif]">
      <svg className="h-3 w-3" viewBox="0 0 12 12"><path d="M0 0l12 6-12 6z" fill="#e8203c" /></svg>
      LIVE
    </button>
    <div className="flex items-center gap-2">
      <TitleIcon label="축소">
        <path d="M2 9V2h16v16h-6M2 5h16" />
        <rect x="2" y="12" width="7" height="6" />
      </TitleIcon>
      <TitleIcon label="복제">
        <rect x="6" y="2" width="13" height="10" />
        <path d="M4 7H1v11h13v-4" />
      </TitleIcon>
      <TitleIcon label="고정">
        <path d="M3 1h12l-3 4 2 5H2l3-4zM7 10l-3 8" fill="#a9b0c0" strokeWidth="1" />
        <rect x="9" y="12" width="10" height="7" fill="#a9b0c0" stroke="#3c4660" strokeWidth="1" />
        <path d="M12 12v-3h5v3" />
      </TitleIcon>
      <button className="w-5 text-[24px] leading-none font-bold text-[#a9b0c0] [font-family:'Liberation_Serif',serif]">T</button>
      <TitleIcon label="분할">
        <path d="M2 2h16v16H2zM10 2v16M2 10h16" />
      </TitleIcon>
      <button className="w-5 text-[24px] leading-none font-bold text-[#a9b0c0] [font-family:'Liberation_Serif',serif]">?</button>
    </div>
    <span className="mx-2.5 h-5 w-px bg-[#8088a0]" />
    <div className="flex items-center gap-1.5">
      <TitleIcon label="최소화"><path d="M3 15h15" strokeWidth="3" /></TitleIcon>
      <TitleIcon label="최대화">
        <path d="M5 3h13v14H5z" />
        <path d="M4 4h15" strokeWidth="4" />
      </TitleIcon>
      <TitleIcon label="닫기"><path d="M4 5l11 11M15 5L4 16" strokeWidth="1.4" /></TitleIcon>
    </div>
  </header>
)

const ToolButton = ({
  active,
  width = "w-[25px]",
  label,
  children,
}: {
  active?: boolean
  width?: string
  label?: string
  children: ReactNode
}) => (
  <button
    aria-label={label}
    className={`flex h-[34px] shrink-0 items-center justify-center border-r-2 border-b border-[#8c8c8c] ${width} ${
      active ? "bg-[#34508c] text-white" : "bg-[#efefef] text-black"
    }`}
  >
    {children}
  </button>
)

const Down = ({ size = 11 }: { size?: number }) => (
  <svg width={size} height="6" viewBox="0 0 12 6"><path d="M0 0h12L6 6z" fill="#555" /></svg>
)

const MiniToolbar = () => (
  <div className={`flex h-10 shrink-0 items-center bg-[#cfd8ea] text-[19px] ${MONO}`}>
    <input
      aria-label="종목코드"
      defaultValue="NQU25"
      className="h-[34px] w-[149px] min-w-0 border border-[#8c8c8c] bg-[#fafcff] px-1 text-[20px] text-black"
    />
    <ToolButton width="w-[21px]" label="목록"><Down /></ToolButton>
    <ToolButton width="w-7" label="검색">
      <svg className="size-5" viewBox="0 0 20 20" fill="none" stroke="#666">
        <circle cx="9" cy="8" r="6" strokeWidth="2" />
        <path d="M12 12l6 7" strokeWidth="3" />
      </svg>
    </ToolButton>
    <ToolButton width="w-[34px]" label="PC">
      <span className="flex items-end leading-none font-bold text-[#b4b4b4]">
        <span className="text-[13px] leading-3">P<br />↳</span>
        <span className="text-[20px] leading-5">C</span>
      </span>
    </ToolButton>
    <div className="flex h-[34px] w-[30px] shrink-0 flex-col border-r-2 border-b border-[#8c8c8c]">
      <button aria-label="이전" className="flex flex-1 items-center justify-center border-b-2 border-[#aaa] bg-[#efefef]">
        <svg className="h-1.5 w-2.5" viewBox="0 0 10 6"><path d="M0 6h10L5 0z" fill="#aaa" /></svg>
      </button>
      <button aria-label="다음" className="flex flex-1 items-center justify-center bg-[#efefef]">
        <svg className="h-1.5 w-2.5" viewBox="0 0 10 6"><path d="M0 0h10L5 6z" fill="#aaa" /></svg>
      </button>
    </div>
    <ToolButton width="w-[33px]" label="소리">
      <svg className="h-5 w-6" viewBox="0 0 24 20" fill="#555">
        <path d="M0 5h5l8-5v20l-8-5H0z" />
        <path d="M15 7h2v2h-2zM19 7h2v2h-2zM22 7h2v2h-2zM15 11h2v2h-2zM19 11h2v2h-2zM15 15h2v2h-2z" />
      </svg>
    </ToolButton>
    <ToolButton width="w-[15px]" label="소리 설정"><Down size={8} /></ToolButton>
    <input
      aria-label="종목명"
      defaultValue="Mini NASDAQ 100"
      className="h-[34px] w-[153px] min-w-0 border border-[#8c8c8c] bg-white pl-1 text-[21px] text-[#333]"
    />
    <div className="ml-1 flex">
      <ToolButton width="w-[17px]" label="왼쪽">
        <svg className="h-3.5 w-2" viewBox="0 0 8 14"><path d="M8 0v14L0 7z" fill="#444" /></svg>
      </ToolButton>
    </div>
    <div className="ml-0.5 flex">
      <ToolButton active>분</ToolButton>
      <ToolButton>초</ToolButton>
      <ToolButton>틱</ToolButton>
      <ToolButton active>1</ToolButton>
      <ToolButton>3</ToolButton>
      <ToolButton>5</ToolButton>
      <ToolButton>10</ToolButton>
      <ToolButton>15</ToolButton>
      <ToolButton>30</ToolButton>
    </div>
    <input
      aria-label="주기"
      defaultValue="1"
      className="h-[34px] w-[39px] min-w-0 border border-[#8c8c8c] bg-white pr-2 pb-1 text-right text-black"
    />
    <ToolButton width="w-4" label="주기 목록"><Down size={8} /></ToolButton>
    <ToolButton>일</ToolButton>
    <ToolButton>주</ToolButton>
    <ToolButton>월</ToolButton>
    <ToolButton>년</ToolButton>
    <ToolButton width="w-[35px]" label="차트 유형">
      <svg className="h-6 w-7" viewBox="0 0 28 24">
        <path d="M1 4h9v9H1zM5 1h1v15H5z" fill="#555" />
        <path d="M12 4h8v8h-8zM15 1h1v14h-1z" fill="#999" />
        <path d="M17 19l5-5v4h4v2h-4v4z" fill="#444" />
      </svg>
    </ToolButton>
  </div>
)

const ZOOM_LEFT = "translate(0 320) scale(.3333)"
const ZOOM_RIGHT = "translate(470 320) scale(.3333)"
const ZOOM_TOP = "translate(400 100) scale(.3444 .3333)"

const MiniChart = () => (
  <div className="flex shrink-0 border-t border-[#8c8c8c]">
    <div className="relative min-w-0 flex-1">
      <svg
        className="block w-full bg-[#c1c1c1]"
        height="406"
        viewBox="16 109 806 406"
        preserveAspectRatio="none"
        shapeRendering="crispEdges"
      >
        {[117, 161, 204, 247, 290, 333, 377, 419, 452].map((y) => (
          <rect key={y} x="16" y={y} width="803" height="1" fill="#dedede" />
        ))}
        {[251, 503, 754].map((x) => (
          <rect key={x} x={x} y="109" width="1" height="406" fill="#dedede" />
        ))}
        <rect x="16" y="446" width="806" height="1" fill="#8a8a8a" />
        <g transform={ZOOM_LEFT}>
          <Line
            points="50,247 190,247 300,242 520,242 800,247 900,253 1250,253 1290,240 1310,228 1340,180 1380,140 1410,75 1440,15"
            color={GREEN}
            width={6}
          />
          <Line
            points="50,220 180,219 420,220 545,226 660,230 785,235 900,240 1025,246 1200,249 1250,252 1310,242 1390,215 1440,185"
            color="#000"
            width={3}
          />
          <Candles items={openingCandles} body={12} />
          <Candles items={breakoutCandles} body={12} />
          <VolumeBars items={openingVolume} />
          <VolumeBars items={earlyVolume} />
          <path d="M727 310h40" stroke="#0a0ae6" strokeWidth="3" />
          <path d="M767 285l28 25-28 25z" fill="#0a0ae6" />
        </g>
        <g transform={ZOOM_RIGHT}>
          <Line
            points="0,203 30,185 70,165 125,135 200,110 300,75 400,58 500,48 680,38 965,38"
            color="#000"
            width={3}
          />
          <VolumeBars items={lateVolume} />
          <Line
            points="-1360,563 -1150,565 -1090,572 -170,572 -100,552 -60,528 -35,522 0,500 55,470 110,468 140,463 170,480 220,485 260,500 305,522 345,515 400,528 450,532 555,522 600,536 700,540 780,548 880,550 955,553"
            color="#111"
            width={1}
          />
        </g>
        <g transform={ZOOM_TOP}>
          <Line
            points="145,822 160,800 190,750 225,685 250,640 290,615 320,592 380,572 450,558 540,547 650,549 700,556 850,562 1000,570 1138,573"
            color={GREEN}
            width={6}
          />
          <Candles items={miniCandles} body={12} />
          <path d="M165 79h40" stroke="#e6190a" strokeWidth="4" />
          <path d="M204 55l28 23-28 25z" fill="#fa0404" />
        </g>
        <rect x="16" y="327" width="803" height="1" fill="#dc1c40" />
      </svg>
      <span className={`absolute top-1 left-[260px] text-[17px] leading-6 text-[#e6190a] ${SANS}`}>
        최고 23173,75 (10:54)
      </span>
      <span className={`absolute top-[301px] left-[45px] text-[17px] leading-6 text-[#0a0ae6] ${SANS}`}>
        최저 22996,25 (10:03)
      </span>
    </div>
    <Axis
      top={109}
      height={406}
      labels={[
        { y: 117, text: "23175,00" },
        { y: 161, text: "23150,00" },
        { y: 204, text: "23125,00" },
        { y: 247, text: "23100,00" },
        { y: 290, text: "23075,00" },
        { y: 333, text: "" },
        { y: 377, text: "23025,00" },
        { y: 419, text: "23000,00" },
        { y: 452, text: "" },
        { y: 512, text: "" },
      ]}
      minor={[...range(153, 445, 8.6), 464, 476, 488, 500]}
    >
      <rect x="2" y="109" width="62" height="36" fill="#d6e1f0" />
      <text x="2" y="126" fill={RED}>LC:0,25</text>
      <text x="2" y="144" fill="#2460c8">HC:-0,52</text>
      <rect x="7" y="316" width="87" height="20" fill="#e6190a" />
      <text x="12" y="332" fill="#fff">23053,00</text>
      <text x="12" y="350" fill={RED}>0,08%</text>
      <rect x="0" y="446" width="96" height="1" fill="#8a8a8a" />
      <CloseMark x={81} y={452} />
      <rect x="7" y="475" width="87" height="20" fill={BLUE} />
      <text x="12" y="491" fill="#fff">34</text>
      <text x="12" y="509" fill="#2460c8">46,58%</text>
    </Axis>
  </div>
)

const MiniHours = () => (
  <div className={`flex h-[26px] shrink-0 border-y border-[#8c8c8c] bg-[#d6e1f0] text-[17px] leading-6 text-[#505357] ${SANS}`}>
    <span className="w-[235px] pl-0.5 text-[19px] font-bold">07/15</span>
    <span className="h-full w-[252px] border-l border-[#777] pl-0.5">10</span>
    <span className="h-full w-[251px] border-l border-[#777] pl-0.5">11</span>
    <span className="h-full w-[68px] border-l border-[#777] pl-0.5">12</span>
    <span className="h-full flex-1 border-l-2 border-[#8c8f94] pl-3">12:08:00</span>
  </div>
)

const PlayButton = ({ label, d }: { label: string; d: string }) => (
  <button
    aria-label={label}
    className="flex h-6 w-[26px] shrink-0 items-center justify-center border border-t-white border-r-2 border-r-[#777] border-b-2 border-b-[#777] border-l-white bg-[#f0f0f0]"
  >
    <svg className="size-3.5" viewBox="0 0 14 14"><path d={d} /></svg>
  </button>
)

const chartTools: { label: string; pressed?: boolean; art: ReactNode }[] = [
  { label: "창 추가", art: <path d="M8 17H1V1h16v8M10 10h10v9H10zM15 10v9M10 14h10" /> },
  { label: "창 복사", art: <path d="M6 13H1V1h13v6M8 8h11v11H8zM8 10h11" /> },
  {
    label: "지표",
    art: (
      <>
        <path d="M0 3h20M0 18h20" strokeDasharray="2 2" />
        <path d="M1 10l4 4 4-4 3 4 6-5M17 1v4M17 16v4" />
      </>
    ),
  },
  { label: "커서", pressed: true, art: <path d="M4 0v20M0 5h20M9 9h6M9 9v6M9 9l9 9" strokeWidth="2" /> },
  { label: "수평선", art: <path d="M0 4h20M1 16l4-3 3-5 4 8 3-8 4 6" /> },
  { label: "수직선", art: <path d="M5 0v20M0 16l5-2 4-7 4 9 4-7 3 4" /> },
  { label: "추세선", art: <path d="M0 18L16 1M2 16l6-3 3-4 4 7 5-5" strokeWidth="2" /> },
  {
    label: "모두 지우기",
    art: <path d="M1 11l6-8h10l-5 8H1v4h10l6-7V3M11 15v-4M12 19v-5M15 19v-5M18 19v-8" />,
  },
  { label: "이미지", art: <path d="M5 6V1h15v10h-4M1 8h15v11H1zM3 15l3-3 3 4 5-5M7 5l3-2 4 3 4-3" /> },
  {
    label: "확대경",
    art: (
      <>
        <circle cx="8" cy="8" r="7" />
        <path d="M13 13l6 6" strokeWidth="3" />
      </>
    ),
  },
  { label: "축소", art: <path d="M3 10h14" strokeWidth="3" /> },
  { label: "확대", art: <path d="M3 10h14M10 3v14" strokeWidth="3" /> },
]

const MiniFooter = () => (
  <div className="flex h-[30px] shrink-0 items-center bg-[#efefef]">
    <PlayButton label="왼쪽으로" d="M9 2v10L4 7z" />
    <div className="flex h-6 w-[224px] justify-end bg-[#f8f8f8]" />
    <div className="h-6 w-[99px] border-r-2 border-b-2 border-l border-[#8c8c8c] border-l-white bg-[#f0f0f0]" />
    <PlayButton label="재생" d="M6 1v12l6-6z" />
    <PlayButton label="뒤로" d="M7 1v12L0 7zM14 1v12L7 7z" />
    <PlayButton label="정지" d="M2 2h11v11H2z" />
    <PlayButton label="앞으로" d="M0 1v12l7-6zM7 1v12l7-6z" />
    <div className="ml-2 flex w-[103px] flex-col gap-1">
      <input
        type="range"
        aria-label="간격"
        min={0}
        max={100}
        defaultValue={33}
        className="h-4 w-full appearance-none bg-[linear-gradient(#999,#999)] bg-[length:100%_2px] bg-center bg-no-repeat [&::-webkit-slider-thumb]:h-4 [&::-webkit-slider-thumb]:w-1.5 [&::-webkit-slider-thumb]:appearance-none [&::-webkit-slider-thumb]:border-r-2 [&::-webkit-slider-thumb]:border-[#777] [&::-webkit-slider-thumb]:bg-[#efefef]"
      />
      <svg className="h-1 w-full" viewBox="0 0 103 4" shapeRendering="crispEdges">
        {range(3, 103, 10).map((x) => (
          <rect key={x} x={x} y="0" width="2" height="4" />
        ))}
      </svg>
    </div>
    <div className="ml-2.5 flex flex-1 items-center justify-between">
      {chartTools.map(({ label, pressed, art }) => (
        <button
          key={label}
          aria-label={label}
          className={`flex h-6 w-[23px] items-center justify-center ${pressed ? "border border-[#aaa] bg-white" : ""}`}
        >
          <svg className="size-5" viewBox="0 0 20 20" fill="none" stroke="#666" strokeWidth="1.4">
            {art}
          </svg>
        </button>
      ))}
      <button className="w-[19px] text-[20px] leading-none font-bold text-[#555] [font-family:'Open_Sans',sans-serif]">A</button>
    </div>
  </div>
)

const MiniWindow = () => (
  <section className="absolute top-[29px] left-2 w-[922px] border border-[#8c8c8c] bg-[#9d9d9d]">
    <TitleBar />
    <div className="mr-1 mb-1 ml-1 flex flex-col border-r-[7px] border-b-2 border-l-[3px] border-[#e8e8e8]">
      <MiniToolbar />
      <MiniChart />
      <MiniHours />
      <MiniFooter />
    </div>
  </section>
)

export default function App() {
  return (
    <div className="relative flex h-screen overflow-hidden bg-[#cdd5e6]">
      <Sidebar />
      <div className="w-2 shrink-0 border-l-2 border-[#7c7c7c] bg-[#9c9c9c]" />
      <div className="w-[5px] shrink-0 bg-[#e6e8e6]" />
      <main className="flex min-w-0 flex-1 flex-col border-l border-[#8c8c8c]">
        <Ticker />
        <div className="h-[9px] shrink-0 border-b-2 border-[#8c8c8c] bg-[#e8eae8]">
          <div className="h-1 border-b border-[#9aa0aa] bg-[#cdd5e6]" />
        </div>
        <PricePane />
        <VolumePane />
        <MacdPane />
        <RsiPane />
        <ObvPane />
        <HourAxis />
      </main>
      <MiniWindow />
    </div>
  )
}
